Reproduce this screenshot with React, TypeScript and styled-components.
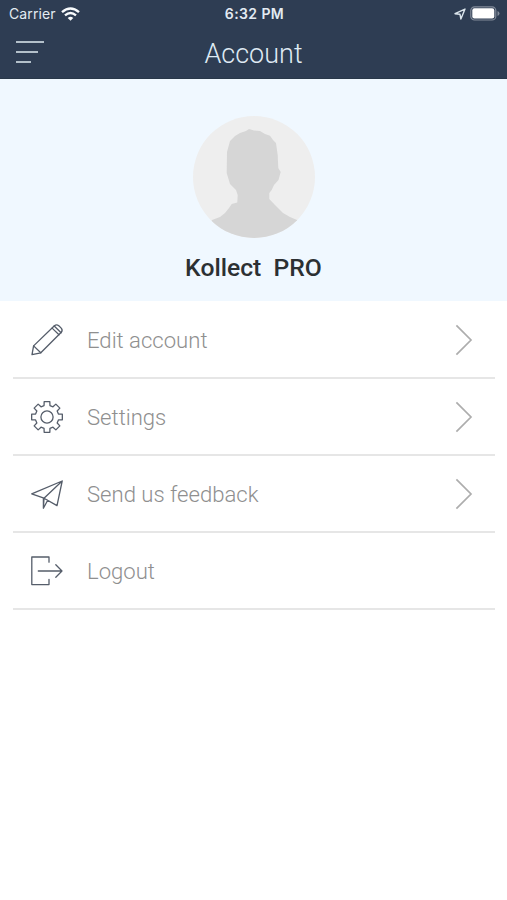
import React from "react";
import styled, { createGlobalStyle } from "styled-components";

const GlobalStyle = createGlobalStyle`
  * { box-sizing: border-box; }
  body { margin: 0; background: #fff; font-family: Roboto, sans-serif; }
`;

const Screen = styled.main`
  width: 507px;
  height: 900px;
  background: #fff;
  overflow: hidden;
`;

const Header = styled.header`
  height: 79px;
  background: #2e3d53;
  border-bottom: 1px solid #293849;
`;

const StatusBar = styled.div`
  display: grid;
  grid-template-columns: 1fr auto 1fr;
  align-items: center;
  height: 27px;
  padding: 0 7px 0 9px;
  font-family: Inter, sans-serif;
  font-size: 14px;
  color: #e3ebf2;
`;

const Carrier = styled.div`
  display: flex;
  align-items: center;
  gap: 5px;
  letter-spacing: 0.1px;
`;

const Clock = styled.div`
  font-weight: 600;
  letter-spacing: 0.4px;
`;

const StatusIcons = styled.div`
  display: flex;
  align-items: center;
  justify-content: flex-end;
  gap: 4px;
`;

const NavBar = styled.div`
  display: grid;
  grid-template-columns: 1fr auto 1fr;
  align-items: center;
  height: 51px;
  padding: 0 16px;
`;

const MenuButton = styled.button`
  display: flex;
  flex-direction: column;
  gap: 8px;
  width: 28px;
  margin-top: -1px;
  padding: 0;
  border: 0;
  background: none;
`;

const MenuLine = styled.span<{ $width: number }>`
  width: ${(p) => p.$width}px;
  height: 2px;
  background: #b3c0ca;
`;

const Title = styled.h1`
  margin: 3px 0 0;
  font-size: 27px;
  font-weight: 300;
  line-height: 32px;
  color: #dfeaf3;
`;

const Profile = styled.section`
  display: flex;
  flex-direction: column;
  align-items: center;
  height: 222px;
  padding-top: 37px;
  background: #f0f8ff;
`;

const Name = styled.h2`
  margin: 14px 0 0;
  font-size: 24.7px;
  font-weight: 500;
  line-height: 32px;
  white-space: pre;
  color: #2c3033;
`;

const Menu = styled.nav`
  padding: 0 12px 0 13px;
`;

const Row = styled.a`
  display: flex;
  align-items: center;
  height: 77px;
  padding: 0 22px 0 17px;
  border-bottom: 2px solid #e6e6e6;

  &:first-child { height: 78px; padding-top: 1px; }
`;

const Label = styled.span`
  flex: 1;
  margin: 1px 0 0 23px;
  font-size: 22.1px;
  font-weight: 300;
  line-height: 30px;
  color: #8f8f8f;
`;

const LineIcon = styled.svg`
  display: block;
  width: 34px;
  height: 34px;
  fill: none;
  stroke: #555d6a;
  stroke-width: 1.3;
  stroke-linejoin: round;
  stroke-linecap: round;
`;

const ChevronIcon = styled.svg`
  display: block;
  fill: none;
  stroke: #adadad;
  stroke-width: 1.7;
`;

function gearOutline() {
  const points: string[] = [];
  for (let i = 0; i < 8; i++) {
    const base = i * 45;
    const corners = [[-14.5, 11.8], [-10.5, 15.6], [10.5, 15.6], [14.5, 11.8]];
    for (const [offset, radius] of corners) {
      const angle = ((base + offset) * Math.PI) / 180;
      points.push(
        `${(17 + radius * Math.sin(angle)).toFixed(2)} ${(17 - radius * Math.cos(angle)).toFixed(2)}`
      );
    }
  }
  return `M${points.join("L")}Z`;
}

const PencilIcon = () => (
  <LineIcon viewBox="0 0 34 34">
    <path d="M2 31.6L3.6 22.9L24.4 2.7Q26.6.9 28.8 2.7L31 4.9Q33.1 7.1 31.3 9.3L10.8 29.8Z" />
    <path d="M3.6 22.9L10.8 29.8M22.1 5.1L29 11.7M24.2 3L31.1 9.7" />
  </LineIcon>
);

const GearIcon = () => (
  <LineIcon viewBox="0 0 34 34">
    <path d={gearOutline()} />
    <circle cx="17" cy="17" r="6.1" />
  </LineIcon>
);

const PlaneIcon = () => (
  <LineIcon viewBox="0 0 34 34">
    <path d="M1.7 16.8L32.2 4L27 28.6L14 21.2ZM32.2 4L14 21.2L13.4 31.2V21.2M13.4 31.2L17.7 23.3" />
  </LineIcon>
);

const LogoutIcon = () => (
  <LineIcon viewBox="0 0 34 34">
    <path d="M19 8.2V3H1.8V30.6H19V25.3M8.3 17H32M25.8 10.8L32 17L25.8 23.2" />
  </LineIcon>
);

const Chevron = () => (
  <ChevronIcon width="18" height="32" viewBox="0 0 18 32">
    <path d="M1.4 1.4L16 16L1.4 30.6" />
  </ChevronIcon>
);

const WifiIcon = () => (
  <svg width="19" height="14" viewBox="0 0 19 14" fill="none" stroke="#f8fbfd" strokeWidth="2.4">
    <path d="M1 5.1Q9.5-2.2 18 5.1M4 8.4Q9.5 3.7 15 8.4" />
    <path d="M6.7 11Q9.5 8.7 12.3 11L9.5 13.8Z" fill="#f8fbfd" stroke="none" />
  </svg>
);

const LocationIcon = () => (
  <svg width="12" height="12" viewBox="0 0 12 12" fill="none" stroke="#dce6ed" strokeWidth="1.4" strokeLinejoin="round">
    <path d="M1 5.7L11 1.1L6.9 11L6 6.3Z" />
  </svg>
);

const BatteryIcon = () => (
  <svg width="30" height="15" viewBox="0 0 30 15">
    <rect x=".8" y=".8" width="25" height="13.2" rx="3.8" fill="none" stroke="#828b9a" strokeWidth="1.2" />
    <rect x="2.3" y="2.3" width="22" height="10.2" rx="2.1" fill="#fff" />
    <path d="M27.5 5V10Q29.5 9.3 29.5 7.5T27.5 5Z" fill="#828b9a" />
  </svg>
);

const Avatar = () => (
  <svg width="122" height="122" viewBox="0 0 122 122">
    <defs>
      <clipPath id="avatar-circle"><circle cx="61" cy="61" r="61" /></clipPath>
    </defs>
    <g clipPath="url(#avatar-circle)">
      <rect width="122" height="122" fill="#eeeeee" />
      <path
        fill="#d6d6d6"
        d="M56 13L61 14.5L67 15L72 18L77 19.7L80 24L83 27L84.7 39L85.3 52L87.7 56L85.5 64L81 69L78.7 74L76.3 77V83L82 89L90 97L97 101L104 104L110 122H12L19 104L27 101L32 97L36 92L38.7 88L44.3 86.5L44.7 79L43 74L37 68L33.7 57L34 36L37 25L42 20L47 17L53 15Z"
      />
    </g>
  </svg>
);

const items = [
  { label: "Edit account", Icon: PencilIcon, arrow: true },
  { label: "Settings", Icon: GearIcon, arrow: true },
  { label: "Send us feedback", Icon: PlaneIcon, arrow: true },
  { label: "Logout", Icon: LogoutIcon, arrow: false },
];

export default function App() {
  return (
    <Screen>
      <GlobalStyle />
      <Header>
        <StatusBar>
          <Carrier>Carrier <WifiIcon /></Carrier>
          <Clock>6:32 PM</Clock>
          <StatusIcons><LocationIcon /><BatteryIcon /></StatusIcons>
        </StatusBar>
        <NavBar>
          <MenuButton aria-label="Menu">
            <MenuLine $width={28} />
            <MenuLine $width={22} />
            <MenuLine $width={15} />
          </MenuButton>
          <Title>Account</Title>
        </NavBar>
      </Header>
      <Profile>
        <Avatar />
        <Name>Kollect  PRO</Name>
      </Profile>
      <Menu>
        {items.map(({ label, Icon, arrow }) => (
          <Row key={label}>
            <Icon />
            <Label>{label}</Label>
            {arrow && <Chevron />}
          </Row>
        ))}
      </Menu>
    </Screen>
  );
}
